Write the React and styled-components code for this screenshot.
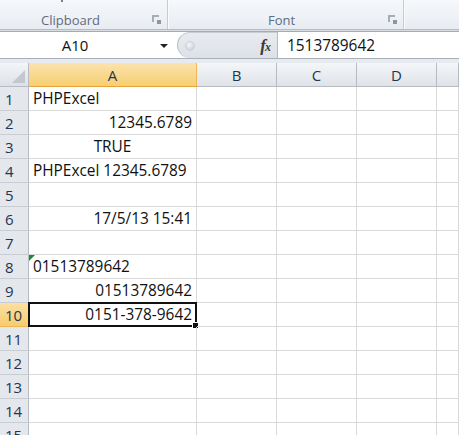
import React from "react";
import styled, { createGlobalStyle } from "styled-components";

const Global = createGlobalStyle`
  html, body { margin: 0; padding: 0; background: #fff; overflow: hidden; }
  body { font-family: "Open Sans", "Liberation Sans", sans-serif; }
`;

const Page = styled.div`
  width: 459px;
  height: 435px;
  display: flex;
  flex-direction: column;
  overflow: hidden;
  & > * { flex-shrink: 0; }
`;

const Ribbon = styled.div`
  height: 29px;
  display: flex;
  background: linear-gradient(#f6f8fb, #e8ecf1);
  border-bottom: 1px solid #b6bcc6;
  box-shadow: 0 1px 0 #d8dde4, 0 2px 0 #a4abb6;
  position: relative;
  z-index: 1;
`;

const Group = styled.div`
  width: ${(p) => p.$w}px;
  flex: ${(p) => (p.$w ? "none" : "1")};
  display: flex;
  align-items: flex-end;
  justify-content: center;
  position: relative;
  border-right: ${(p) => (p.$last ? "none" : "1px solid #c5cbd3")};
  box-shadow: ${(p) => (p.$last ? "none" : "1px 0 0 #fafbfc")};
  padding-bottom: 1px;
  box-sizing: border-box;
`;

const GroupLabel = styled.span`
  font-size: 13px;
  color: #5d6c82;
  line-height: 16px;
  margin-left: ${(p) => p.$ml || 0}px;
`;

const Launcher = styled.div`
  position: absolute;
  right: 8px;
  bottom: 7px;
  width: 7px;
  height: 7px;
  border-left: 2px solid #a7adb6;
  border-top: 2px solid #a7adb6;
  box-sizing: border-box;
  &::after {
    content: "";
    position: absolute;
    right: -2px;
    bottom: -2px;
    width: 4px;
    height: 4px;
    background: #8e959f;
  }
`;

const Tick = styled.div`
  position: absolute;
  left: 61px;
  top: 0;
  width: 2px;
  height: 2px;
  background: #7a828d;
`;

const FormulaBar = styled.div`
  margin-top: 2px;
  height: 26px;
  display: flex;
  align-items: center;
  background: #fff;
  border-bottom: 1px solid #aab0b9;
`;

const NameBox = styled.div`
  width: 172px;
  height: 100%;
  display: flex;
  align-items: center;
  position: relative;
  font-size: 15px;
  color: #111;
  box-sizing: border-box;
`;

const NameText = styled.span`
  flex: 1;
  text-align: center;
  padding-right: 22px;
`;

const Arrow = styled.span`
  position: absolute;
  right: 4px;
  top: 12px;
  width: 0;
  height: 0;
  border-left: 4px solid transparent;
  border-right: 4px solid transparent;
  border-top: 4px solid #222;
`;

const Capsule = styled.div`
  margin-left: 5px;
  width: 100px;
  height: 100%;
  background: linear-gradient(#e8ebef, #dde1e7);
  border-left: 1px solid #b5bbc4;
  border-top: 1px solid #c8cdd4;
  border-radius: 14px 0 0 14px;
  box-sizing: border-box;
  display: flex;
  align-items: center;
  position: relative;
`;

const Knob = styled.span`
  width: 8px;
  height: 8px;
  border-radius: 50%;
  margin-left: 7px;
  background: radial-gradient(circle at 40% 35%, #f4f5f7, #c4c9d0);
  border: 1px solid #cdd2d8;
`;

const Fx = styled.span`
  margin-left: auto;
  margin-right: 7px;
  font-family: "Liberation Serif", "DejaVu Serif", serif;
  font-style: italic;
  font-weight: bold;
  font-size: 17px;
  color: #3a3a3a;
  letter-spacing: -1px;
  & small {
    font-size: 12px;
  }
`;

const FormulaInput = styled.div`
  flex: 1;
  height: 100%;
  border-left: 1px solid #b5bbc4;
  display: flex;
  align-items: center;
  padding-left: 9px;
  font-size: 15.4px;
  color: #111;
`;

const Band = styled.div`
  height: 4px;
  background: #e7ebf0;
`;

const Sheet = styled.div`
  display: grid;
  grid-template-columns: 29px 168px 80px 80px 80px 1fr;
  grid-auto-rows: 24px;
`;

const Corner = styled.div`
  background: linear-gradient(#f3f5f8, #dde1e6);
  border-right: 1px solid #b7bcc4;
  border-bottom: 1px solid #b7bcc4;
  box-sizing: border-box;
  position: relative;
  &::after {
    content: "";
    position: absolute;
    right: 3px;
    bottom: 3px;
    width: 0;
    height: 0;
    border-left: 13px solid transparent;
    border-bottom: 13px solid #c3c8cf;
  }
`;

const ColHead = styled.div`
  box-sizing: border-box;
  display: flex;
  align-items: center;
  justify-content: center;
  font-size: 15px;
  color: #24364f;
  background: ${(p) =>
    p.$active
      ? "linear-gradient(#fbe3ae, #f7cf72)"
      : "linear-gradient(#f4f6f9, #dfe3e8)"};
  border-right: 1px solid ${(p) => (p.$active ? "#f0b654" : "#b7bcc4")};
  border-bottom: 1px solid ${(p) => (p.$active ? "#e9a437" : "#b7bcc4")};
`;

const RowHead = styled.div`
  box-sizing: border-box;
  display: flex;
  align-items: center;
  padding-left: 5px;
  font-size: 15px;
  color: #24364f;
  background: ${(p) =>
    p.$active ? "linear-gradient(#fbe0a4, #f6cc6c)" : "#e4e7ec"};
  border-right: 1px solid ${(p) => (p.$active ? "#e9a437" : "#b7bcc4")};
  border-bottom: 1px solid ${(p) => (p.$active ? "#f0b654" : "#c8ccd3")};
`;

const Cell = styled.div`
  box-sizing: border-box;
  border-right: 1px solid #d9d9d9;
  border-bottom: 1px solid #d9d9d9;
  display: flex;
  align-items: flex-end;
  justify-content: ${(p) =>
    p.$align === "right" ? "flex-end" : p.$align === "center" ? "center" : "flex-start"};
  padding: 0 4px 1px 4px;
  font-size: 15.4px;
  line-height: 20px;
  color: #111;
  white-space: nowrap;
  position: relative;
`;

const TextFlag = styled.span`
  position: absolute;
  left: 0;
  top: 0;
  width: 0;
  height: 0;
  border-top: 6px solid #1f8a2f;
  border-right: 6px solid transparent;
`;

const Selection = styled.span`
  position: absolute;
  left: -1px;
  top: -1px;
  right: -1px;
  bottom: -1px;
  border: 2px solid #111;
  pointer-events: none;
  &::after {
    content: "";
    position: absolute;
    right: -4px;
    bottom: -4px;
    width: 5px;
    height: 5px;
    background: #111;
    border: 1px solid #fff;
  }
`;

const data = {
  1: { text: "PHPExcel", align: "left" },
  2: { text: "12345.6789", align: "right" },
  3: { text: "TRUE", align: "center" },
  4: { text: "PHPExcel 12345.6789", align: "left" },
  6: { text: "17/5/13 15:41", align: "right" },
  8: { text: "01513789642", align: "left", flag: true },
  9: { text: "01513789642", align: "right" },
  10: { text: "0151-378-9642", align: "right", selected: true },
};

const cols = ["A", "B", "C", "D", ""];

export default function App() {
  const rows = Array.from({ length: 15 }, (_, i) => i + 1);
  return (
    <Page>
      <Global />
      <Ribbon>
        <Tick />
        <Group $w={168}>
          <GroupLabel $ml={-26}>Clipboard</GroupLabel>
          <Launcher />
        </Group>
        <Group $w={236}>
          <GroupLabel $ml={-8}>Font</GroupLabel>
          <Launcher />
        </Group>
        <Group $last />
      </Ribbon>
      <FormulaBar>
        <NameBox>
          <NameText>A10</NameText>
          <Arrow />
        </NameBox>
        <Capsule>
          <Knob />
          <Fx>
            f<small>x</small>
          </Fx>
        </Capsule>
        <FormulaInput>1513789642</FormulaInput>
      </FormulaBar>
      <Band />
      <Sheet>
        <Corner />
        {cols.map((c, i) => (
          <ColHead key={i} $active={c === "A"}>
            {c}
          </ColHead>
        ))}
        {rows.map((r) => (
          <React.Fragment key={r}>
            <RowHead $active={r === 10}>{r}</RowHead>
            {cols.map((c, i) => {
              const d = i === 0 ? data[r] : null;
              return (
                <Cell key={i} $align={d ? d.align : "left"}>
                  {d && d.flag && <TextFlag />}
                  {d ? d.text : null}
                  {d && d.selected && <Selection />}
                </Cell>
              );
            })}
          </React.Fragment>
        ))}
      </Sheet>
    </Page>
  );
}
